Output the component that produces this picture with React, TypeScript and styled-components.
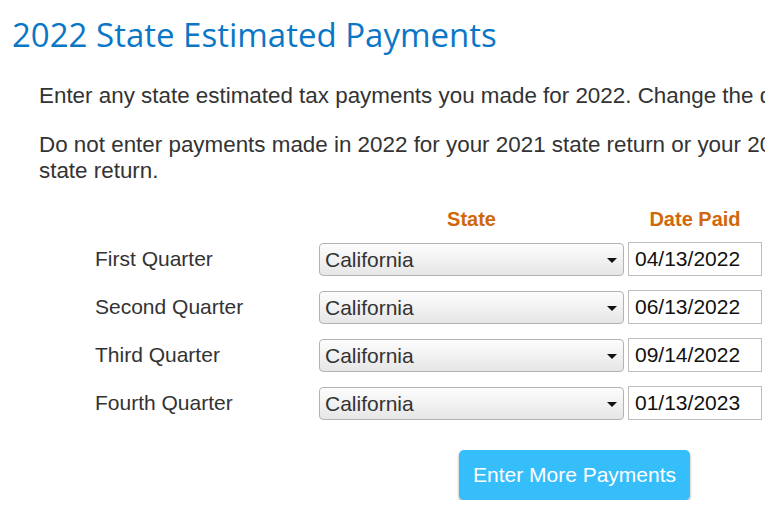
import React from "react";
import styled, { createGlobalStyle } from "styled-components";

const Global = createGlobalStyle`
  html, body {
    margin: 0;
    padding: 0;
    background: #ffffff;
    overflow: hidden;
  }
  body {
    font-family: "Liberation Sans", Arial, sans-serif;
    color: #333333;
  }
`;

const Page = styled.div`
  width: 820px;
  padding: 14px 0 0 12px;
`;

const Title = styled.h1`
  margin: 0;
  font-family: "Open Sans", "Noto Sans", sans-serif;
  font-weight: 400;
  font-size: 33px;
  line-height: 42px;
  color: #0a77c6;
`;

const Body = styled.div`
  padding: 27px 0 0 27px;
  width: 780px;
`;

const Para = styled.p<{ $nowrap?: boolean }>`
  margin: 0 0 23px 0;
  font-size: 22.4px;
  line-height: 26px;
  color: #333333;
  white-space: ${(p) => (p.$nowrap ? "nowrap" : "normal")};
`;

const Grid = styled.div`
  display: grid;
  grid-template-columns: 220px 305px 134px;
  column-gap: 4px;
  row-gap: 14px;
  align-items: center;
  margin: 7px 0 0 56px;
`;

const HeaderCell = styled.div`
  font-size: 20px;
  font-weight: 700;
  color: #d0680b;
  text-align: center;
  line-height: 24px;
  margin-bottom: -3px;
`;

const Label = styled.div`
  font-size: 21px;
  color: #333333;
`;

const SelectWrap = styled.div`
  position: relative;
  height: 33px;
`;

const Select = styled.select`
  appearance: none;
  -webkit-appearance: none;
  width: 100%;
  height: 33px;
  box-sizing: border-box;
  border: 1px solid #b3b3b3;
  border-radius: 4px;
  background: linear-gradient(#fdfdfd, #e6e6e6);
  box-shadow: inset 0 1px 0 #ffffff;
  font-family: "Liberation Sans", Arial, sans-serif;
  font-size: 21px;
  color: #333333;
  padding: 0 0 0 5px;
  outline: none;
`;

const Arrow = styled.span`
  position: absolute;
  right: 7px;
  top: 15px;
  width: 0;
  height: 0;
  border-left: 5px solid transparent;
  border-right: 5px solid transparent;
  border-top: 5px solid #111111;
  pointer-events: none;
`;

const DateInput = styled.input`
  width: 134px;
  height: 34px;
  box-sizing: border-box;
  border: 1px solid #bdbdbd;
  background: #ffffff;
  font-family: "Liberation Sans", Arial, sans-serif;
  font-size: 21px;
  color: #111111;
  padding: 0 0 0 6px;
  outline: none;
`;

const ButtonRow = styled.div`
  display: flex;
  padding: 30px 0 0 420px;
`;

const Button = styled.button`
  width: 231px;
  height: 50px;
  border: none;
  border-radius: 5px;
  background: #36befb;
  color: #ffffff;
  font-family: "Liberation Sans", Arial, sans-serif;
  font-size: 21px;
  box-shadow: 0 2px 3px rgba(0, 0, 0, 0.35);
  cursor: pointer;
`;

const rows = [
  { label: "First Quarter", date: "04/13/2022" },
  { label: "Second Quarter", date: "06/13/2022" },
  { label: "Third Quarter", date: "09/14/2022" },
  { label: "Fourth Quarter", date: "01/13/2023" },
];

export default function App() {
  return (
    <Page>
      <Global />
      <Title>2022 State Estimated Payments</Title>
      <Body>
        <Para $nowrap>
          Enter any state estimated tax payments you made for 2022. Change the dates if needed.
        </Para>
        <Para>
          Do not enter payments made in 2022 for your 2021 state return or your 2023 state return.
        </Para>
        <Grid>
          <div />
          <HeaderCell>State</HeaderCell>
          <HeaderCell>Date Paid</HeaderCell>
          {rows.map((r) => (
            <React.Fragment key={r.label}>
              <Label>{r.label}</Label>
              <SelectWrap>
                <Select defaultValue="CA">
                  <option value="CA">California</option>
                </Select>
                <Arrow />
              </SelectWrap>
              <DateInput defaultValue={r.date} />
            </React.Fragment>
          ))}
        </Grid>
        <ButtonRow>
          <Button>Enter More Payments</Button>
        </ButtonRow>
      </Body>
    </Page>
  );
}
